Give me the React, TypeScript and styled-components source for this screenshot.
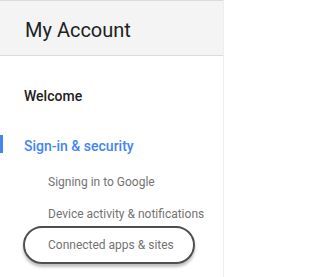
import React from 'react';
import styled, { createGlobalStyle } from 'styled-components';

const GlobalStyle = createGlobalStyle`
  html, body {
    margin: 0;
    padding: 0;
    background: #ffffff;
  }
  body {
    font-family: Roboto, 'Liberation Sans', Arial, sans-serif;
    -webkit-font-smoothing: antialiased;
  }
`;

const Sidebar = styled.div`
  width: 223px;
  height: 277px;
  border-right: 1px solid #eeeeee;
  background: #ffffff;
`;

const Header = styled.div`
  height: 37px;
  padding: 17px 0 0 25px;
  background: #f4f4f4;
  border-top: 1px solid #dcdcdc;
  border-bottom: 1px solid #dcdcdc;
`;

const Title = styled.h1`
  margin: 0;
  font-size: 20px;
  font-weight: 400;
  line-height: 24px;
  color: #212121;
`;

const Nav = styled.nav`
  display: flex;
  flex-direction: column;
  padding-top: 31px;
`;

const Section = styled.div<{ active?: boolean }>`
  display: flex;
  align-items: flex-start;
  margin-bottom: ${(p) => (p.active ? '18px' : '30px')};
`;

const Marker = styled.div<{ active?: boolean }>`
  width: 3px;
  height: 18px;
  flex-shrink: 0;
  background: ${(p) => (p.active ? '#4285f4' : 'transparent')};
`;

const SectionLabel = styled.span<{ active?: boolean }>`
  margin-left: 21px;
  margin-top: ${(p) => (p.active ? '2px' : '0')};
  font-size: 14px;
  font-weight: 500;
  line-height: 18px;
  color: ${(p) => (p.active ? '#4285f4' : '#212121')};
`;

const SubList = styled.div`
  display: flex;
  flex-direction: column;
  gap: 13.5px;
`;

const SubItem = styled.div`
  height: 18px;
  line-height: 18px;
  padding-left: 48px;
  font-size: 12px;
  color: #737373;
  white-space: nowrap;
`;

const Highlight = styled.span`
  display: inline-block;
  margin: -10px 0 -10px -25px;
  padding: 8px 19px 8px 23px;
  border: 2px solid #4f4f4f;
  border-radius: 20px;
  box-shadow: 0 3px 3px rgba(0, 0, 0, 0.25);
`;

const App = (): React.ReactElement => (
  <>
    <GlobalStyle />
    <Sidebar>
      <Header>
        <Title>My Account</Title>
      </Header>
      <Nav>
        <Section>
          <Marker />
          <SectionLabel>Welcome</SectionLabel>
        </Section>
        <Section active>
          <Marker active />
          <SectionLabel active>Sign-in &amp; security</SectionLabel>
        </Section>
        <SubList>
          <SubItem>Signing in to Google</SubItem>
          <SubItem>Device activity &amp; notifications</SubItem>
          <SubItem>
            <Highlight>Connected apps &amp; sites</Highlight>
          </SubItem>
        </SubList>
      </Nav>
    </Sidebar>
  </>
);

export default App;
